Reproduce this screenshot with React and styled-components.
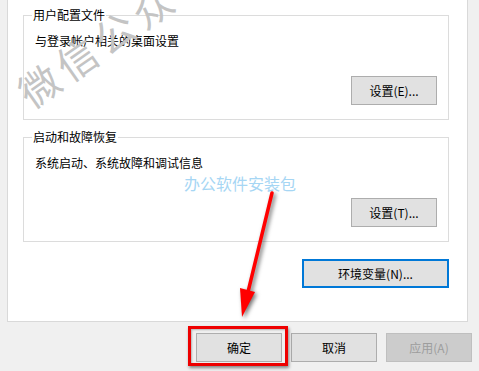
import React from 'react';
import styled, { createGlobalStyle } from 'styled-components';

const GlobalStyle = createGlobalStyle`
  html, body {
    margin: 0;
    padding: 0;
    background: #f0f0f0;
  }
  body {
    font-family: "Noto Sans CJK SC", "Noto Sans", sans-serif;
    font-size: 12px;
    color: #000;
  }
`;

const StyledPage = styled.div`
  position: relative;
  width: 479px;
  height: 371px;
  overflow: hidden;
  background: #f0f0f0;
`;

const StyledPanel = styled.div`
  margin-left: 7px;
  width: 461px;
  height: 322px;
  padding: 0 20px 0 15px;
  box-sizing: border-box;
  background: #fff;
  border: 1px solid #d9d9d9;
  border-top: none;
  display: flex;
  flex-direction: column;
  align-items: flex-start;
`;

const StyledGroup = styled.fieldset`
  margin: ${({ first }) => (first ? '7px 0 0 0' : '9px 0 0 0')};
  padding: 0 11px 14px 8px;
  width: 426px;
  box-sizing: border-box;
  border: 1px solid #dcdcdc;
  display: flex;
  flex-direction: column;
  min-width: 0;
`;

const StyledLegend = styled.legend`
  padding: 0 1px;
  line-height: 16px;
  font-size: 12px;
`;

const StyledDescription = styled.p`
  margin: 10px 0 0 3px;
  line-height: 16px;
`;

const StyledButton = styled.button`
  font-family: "Noto Sans CJK SC", "Noto Sans", sans-serif;
  font-size: 12px;
  width: ${({ wide }) => (wide ? '147px' : '86px')};
  height: 29px;
  padding: 0;
  box-sizing: border-box;
  background: ${({ disabled }) => (disabled ? '#cccccc' : '#e1e1e1')};
  color: ${({ disabled }) => (disabled ? '#9d9d9d' : '#000')};
  border: ${({ focused, disabled }) =>
    focused ? '2px solid #0078d7' : disabled ? '1px solid #bfbfbf' : '1px solid #adadad'};
  border-radius: 0;
  align-self: ${({ alignEnd }) => (alignEnd ? 'flex-end' : 'auto')};
  margin-top: ${({ gap }) => gap || 0}px;
`;

const StyledEnvRow = styled.div`
  width: 426px;
  display: flex;
  justify-content: flex-end;
  margin-top: 17px;
`;

const StyledFooter = styled.div`
  display: flex;
  justify-content: flex-end;
  gap: 9px;
  padding: 11px 7px 0 0;
`;

const StyledHighlight = styled.div`
  position: relative;

  &::after {
    content: '';
    position: absolute;
    left: -8px;
    top: -7px;
    right: -6px;
    bottom: -4px;
    border: 3px solid #ee0000;
    box-shadow: 1px 2px 3px rgba(0, 0, 0, 0.45), inset 1px 1px 2px rgba(0, 0, 0, 0.25);
    pointer-events: none;
  }
`;

const StyledWatermark = styled.span`
  position: absolute;
  left: 22px;
  top: 76px;
  line-height: 40px;
  font-size: 40px;
  letter-spacing: 6px;
  color: #c4c4c4;
  white-space: nowrap;
  transform-origin: 0 50%;
  transform: rotate(-35deg);
  pointer-events: none;
`;

const StyledBrand = styled.span`
  position: absolute;
  left: 184px;
  top: 173px;
  font-size: 16px;
  line-height: 20px;
  color: #a6d6f4;
  white-space: nowrap;
  pointer-events: none;
`;

const StyledArrow = styled.svg`
  position: absolute;
  left: 0;
  top: 0;
  pointer-events: none;
  filter: drop-shadow(2px 2px 2px rgba(0, 0, 0, 0.55));
`;

const groups = [
  {
    title: '用户配置文件',
    text: '与登录帐户相关的桌面设置',
    button: '设置(E)...',
  },
  {
    title: '启动和故障恢复',
    text: '系统启动、系统故障和调试信息',
    button: '设置(T)...',
  },
];

const App = () => (
  <>
    <GlobalStyle />
    <StyledPage>
      <StyledPanel>
        {groups.map((group, i) => (
          <StyledGroup key={group.title} first={i === 0}>
            <StyledLegend>{group.title}</StyledLegend>
            <StyledDescription>{group.text}</StyledDescription>
            <StyledButton alignEnd gap={27}>
              {group.button}
            </StyledButton>
          </StyledGroup>
        ))}
        <StyledEnvRow>
          <StyledButton wide focused>
            环境变量(N)...
          </StyledButton>
        </StyledEnvRow>
      </StyledPanel>
      <StyledFooter>
        <StyledHighlight>
          <StyledButton>确定</StyledButton>
        </StyledHighlight>
        <StyledButton>取消</StyledButton>
        <StyledButton disabled>应用(A)</StyledButton>
      </StyledFooter>

      <StyledWatermark>微信公众号</StyledWatermark>
      <StyledBrand>办公软件安装包</StyledBrand>
      <StyledArrow width="479" height="371" viewBox="0 0 479 371">
        <line x1="272" y1="193" x2="248" y2="292" stroke="#ff0000" strokeWidth="3.5" strokeLinecap="round" />
        <polygon points="240,288 255,292 242,317" fill="#ff0000" />
      </StyledArrow>
    </StyledPage>
  </>
);

export default App;
